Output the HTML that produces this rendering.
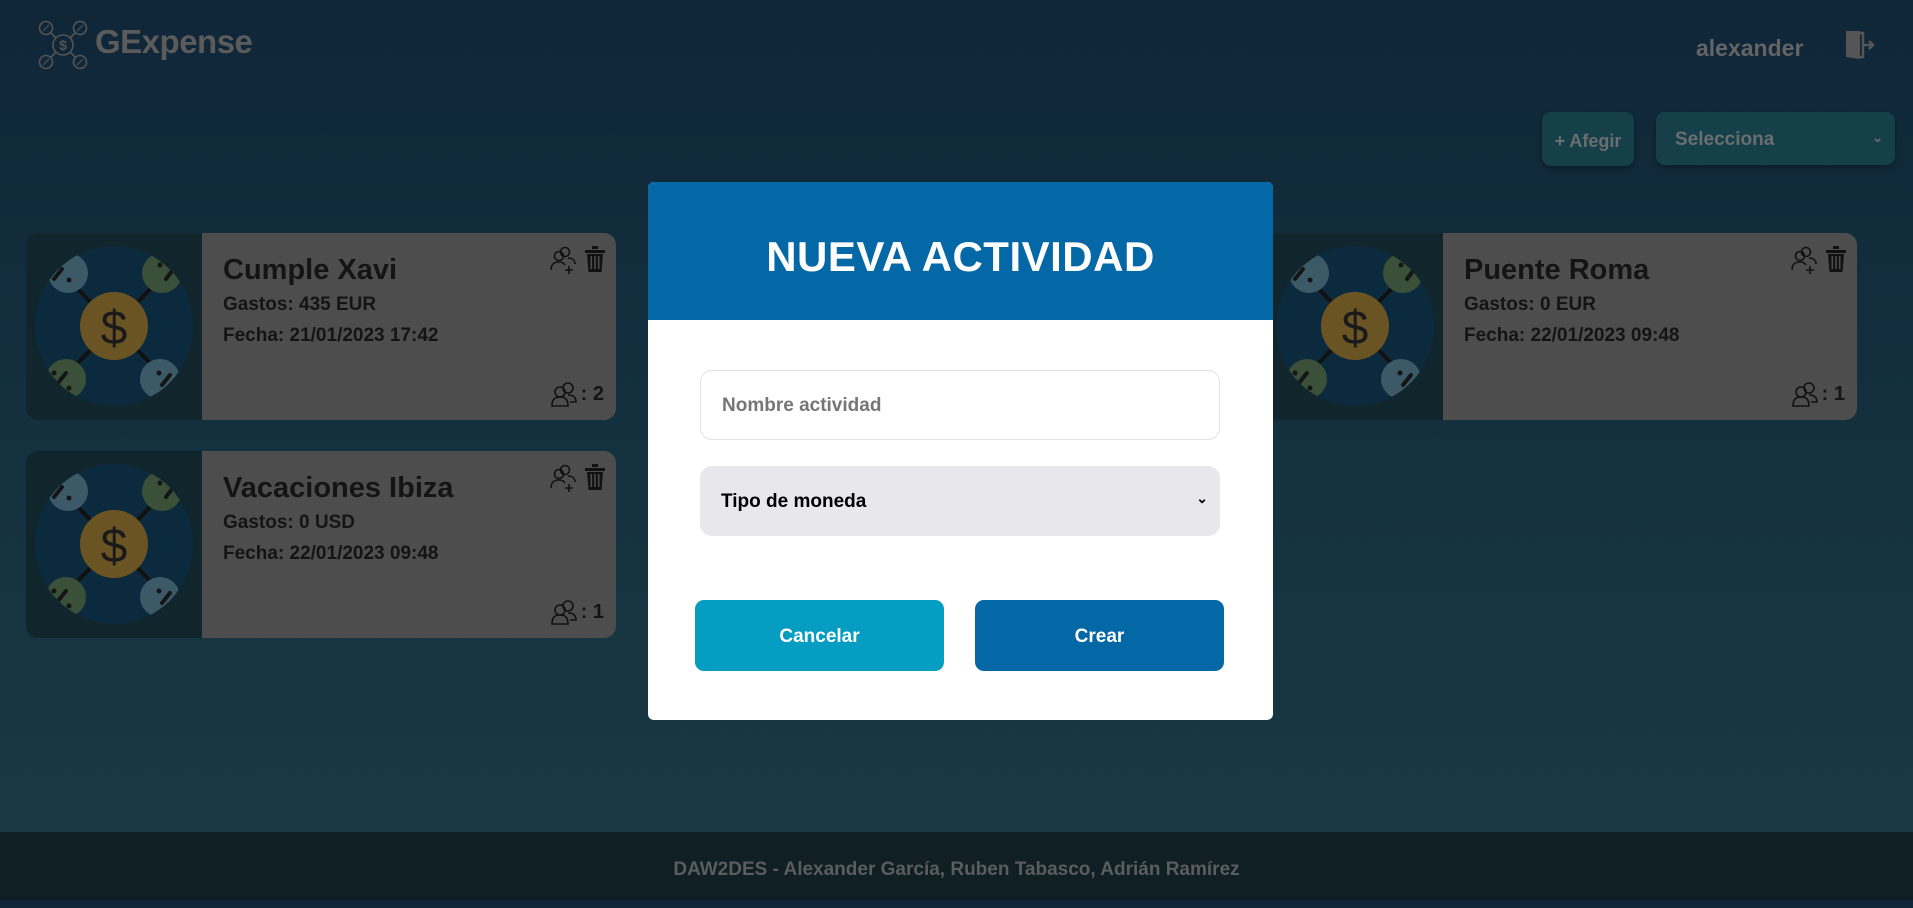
<!DOCTYPE html>
<html><head><meta charset="utf-8">
<style>
*{box-sizing:border-box;margin:0;padding:0}
body{width:1913px;height:900px;overflow:hidden;font-family:"Liberation Sans",sans-serif;font-weight:bold;position:relative;
background:linear-gradient(180deg,#0f2638 0%,#132f3e 40%,#1b3a44 100%);}
.abs{position:absolute}
.logo-t{left:95px;top:23px;font-size:33px;color:#5b5b5b;letter-spacing:-0.5px}
.user{left:1696px;top:35px;font-size:23px;color:#646464}
.btn-a{left:1542px;top:112px;width:92px;height:54px;background:#15404a;border-radius:9px;color:#6a6e6e;font-size:18px;line-height:58px;text-align:center;box-shadow:0 3px 6px rgba(0,0,0,.3)}
.sel{left:1656px;top:112px;width:239px;height:53px;background:#15404a;border-radius:9px;color:#6a6e6e;font-size:19px;line-height:56px;padding-left:19px;box-shadow:0 3px 6px rgba(0,0,0,.3)}
.card{width:590px;height:187px;background:#4d4d4d;border-radius:12px;overflow:hidden}
.card .img{position:absolute;left:0;top:0;width:176px;height:187px;background:#11252c}
.card h2{position:absolute;left:197px;top:21px;font-size:29px;color:#141414}
.card .l1{position:absolute;left:197px;top:61px;font-size:19px;color:#141414}
.card .l2{position:absolute;left:197px;top:92px;font-size:19px;color:#141414}
.card .ic{position:absolute;right:10px;top:13px}
.card .cnt{position:absolute;right:12px;bottom:12px;font-size:20px;color:#141414;display:flex;align-items:center;gap:3px}
.footer{left:0;top:832px;width:1913px;height:68px;background:#101f24;color:#595d5e;font-size:19px;text-align:center;line-height:76px}
.modal{left:648px;top:182px;width:625px;height:538px;background:#fff;border-radius:6px;overflow:hidden}
.mh{height:138px;background:#0467a6;color:#fff;font-size:42px;text-align:center;line-height:150px;letter-spacing:0.5px}
.inp{position:absolute;left:52px;top:188px;width:520px;height:70px;border:1px solid #e3e3e3;border-radius:12px;color:#767676;font-size:19px;line-height:70px;padding-left:21px}
.msel{position:absolute;left:52px;top:284px;width:520px;height:70px;background:#e8e7ec;border-radius:12px;color:#000;font-size:19px;line-height:72px;padding-left:21px}
.b{position:absolute;top:418px;width:249px;height:71px;border-radius:9px;color:#fff;font-size:19px;text-align:center;line-height:73px}
</style></head><body>

<svg class="abs" style="left:30px;top:10px" width="70" height="70" viewBox="0 0 70 70" fill="none" stroke="#545454" stroke-width="1.6">
<circle cx="33" cy="35" r="10"/>
<circle cx="16" cy="18" r="6.5"/><circle cx="50" cy="18" r="6.5"/><circle cx="16" cy="52" r="6.5"/><circle cx="50" cy="52" r="6.5"/>
<line x1="21" y1="23" x2="26" y2="28"/><line x1="45" y1="23" x2="40" y2="28"/><line x1="21" y1="47" x2="26" y2="42"/><line x1="45" y1="47" x2="40" y2="42"/>
<path d="M13 21 L19 15 M47 21 L53 15 M13 55 L19 49 M47 55 L53 49" stroke-width="1.2"/>
<text x="33" y="40" font-size="14" fill="#545454" stroke="none" text-anchor="middle" font-family="Liberation Sans">$</text>
</svg>
<div class="abs logo-t">GExpense</div>
<div class="abs user">alexander</div>
<svg class="abs" style="left:1843px;top:28px" width="34" height="34" viewBox="0 0 34 34">
<path d="M3 3 H17 V31 L3 29 Z" fill="#555"/>
<path d="M17 5 H20 V29 H17" fill="none" stroke="#555" stroke-width="2.5"/>
<path d="M20 17 H30 M26 13 L30 17 L26 21" fill="none" stroke="#555" stroke-width="2.5"/>
</svg>
<div class="abs btn-a">+ Afegir</div>
<div class="abs sel">Selecciona<span style="position:absolute;right:12px;top:-2px;font-size:13px">&#8964;</span></div>

<svg width="0" height="0" style="position:absolute">
<defs>
<clipPath id="cp"><ellipse cx="88" cy="93" rx="79" ry="80"/></clipPath>
<g id="art">
<ellipse cx="88" cy="93" rx="79" ry="80" fill="#0c2a3e"/>
<g stroke="#111" stroke-width="4"><line x1="38" y1="42" x2="138" y2="144"/><line x1="138" y1="42" x2="38" y2="144"/></g>
<g clip-path="url(#cp)">
<circle cx="42" cy="40" r="20" fill="#3b5966"/><circle cx="136" cy="40" r="20" fill="#3a5038"/>
<circle cx="40" cy="146" r="20" fill="#3a5038"/><circle cx="134" cy="146" r="20" fill="#3b5966"/>
<g stroke="#151515" stroke-width="4" stroke-linecap="round"><line x1="28" y1="46" x2="36" y2="36"/><line x1="140" y1="46" x2="146" y2="38"/><line x1="32" y1="150" x2="40" y2="140"/><line x1="136" y1="152" x2="144" y2="142"/></g>
<g fill="#151515"><circle cx="43" cy="47" r="2.5"/><circle cx="134" cy="32" r="2.5"/><circle cx="28" cy="140" r="2.5"/><circle cx="133" cy="140" r="2.5"/><circle cx="43" cy="155" r="2.5"/></g>
</g>
<circle cx="88" cy="93" r="34" fill="#6b5424"/>
<text x="88" y="111" font-size="48" fill="#1a1a1a" text-anchor="middle" font-family="Liberation Sans" font-weight="normal">$</text>
</g>
<g id="icons">
<g fill="none" stroke="#111" stroke-width="1.6">
<circle cx="16" cy="6" r="4.5"/><circle cx="10" cy="10" r="4.5"/>
<path d="M2 24 C2 18 5 16 10 16 C13 16 15 17 16 19"/>
<path d="M19 12 C23 12 26 14 26 18"/>
<path d="M20 20 V28 M16 24 H24"/>
</g>
<g transform="translate(36,0)" fill="#111">
<rect x="0" y="4" width="20" height="3"/><rect x="7" y="0" width="6" height="3"/>
<path d="M2 8 H18 L16.5 26 H3.5 Z"/>
<rect x="5.5" y="10" width="1.6" height="13" fill="#4d4d4d"/><rect x="9.2" y="10" width="1.6" height="13" fill="#4d4d4d"/><rect x="12.9" y="10" width="1.6" height="13" fill="#4d4d4d"/>
</g>
</g>
<g id="grp" fill="none" stroke="#111" stroke-width="1.6">
<circle cx="10" cy="11" r="5"/><circle cx="18" cy="7" r="5"/>
<path d="M2 25 C2 18 5 16 10 16 C15 16 18 18 18 25 Z"/>
<path d="M18 14 C24 14 26 17 26 21 L20 21"/>
</g>
</defs></svg>

<div class="abs card" style="left:26px;top:233px">
<svg class="img" viewBox="0 0 176 187"><rect width="176" height="187" fill="#11252c"/><use href="#art"/></svg>
<h2>Cumple Xavi</h2><div class="l1">Gastos: 435 EUR</div><div class="l2">Fecha: 21/01/2023 17:42</div>
<svg class="ic" width="57" height="28" viewBox="0 0 57 28"><use href="#icons"/></svg>
<div class="cnt"><svg width="28" height="27" viewBox="0 0 28 27"><use href="#grp"/></svg>: 2</div>
</div>

<div class="abs card" style="left:26px;top:451px">
<svg class="img" viewBox="0 0 176 187"><rect width="176" height="187" fill="#11252c"/><use href="#art"/></svg>
<h2>Vacaciones Ibiza</h2><div class="l1">Gastos: 0 USD</div><div class="l2">Fecha: 22/01/2023 09:48</div>
<svg class="ic" width="57" height="28" viewBox="0 0 57 28"><use href="#icons"/></svg>
<div class="cnt"><svg width="28" height="27" viewBox="0 0 28 27"><use href="#grp"/></svg>: 1</div>
</div>

<div class="abs card" style="left:1267px;top:233px">
<svg class="img" viewBox="0 0 176 187"><rect width="176" height="187" fill="#11252c"/><use href="#art"/></svg>
<h2>Puente Roma</h2><div class="l1">Gastos: 0 EUR</div><div class="l2">Fecha: 22/01/2023 09:48</div>
<svg class="ic" width="57" height="28" viewBox="0 0 57 28"><use href="#icons"/></svg>
<div class="cnt"><svg width="28" height="27" viewBox="0 0 28 27"><use href="#grp"/></svg>: 1</div>
</div>

<div class="abs modal">
<div class="mh">NUEVA ACTIVIDAD</div>
<div class="inp">Nombre actividad</div>
<div class="msel">Tipo de moneda<span style="position:absolute;right:12px;top:-4px;font-size:14px">&#8964;</span></div>
<div class="b" style="left:47px;background:#069dc2">Cancelar</div>
<div class="b" style="left:327px;background:#0467a6">Crear</div>
</div>

<div class="abs footer">DAW2DES - Alexander García, Ruben Tabasco, Adrián Ramírez</div>
</body></html>
